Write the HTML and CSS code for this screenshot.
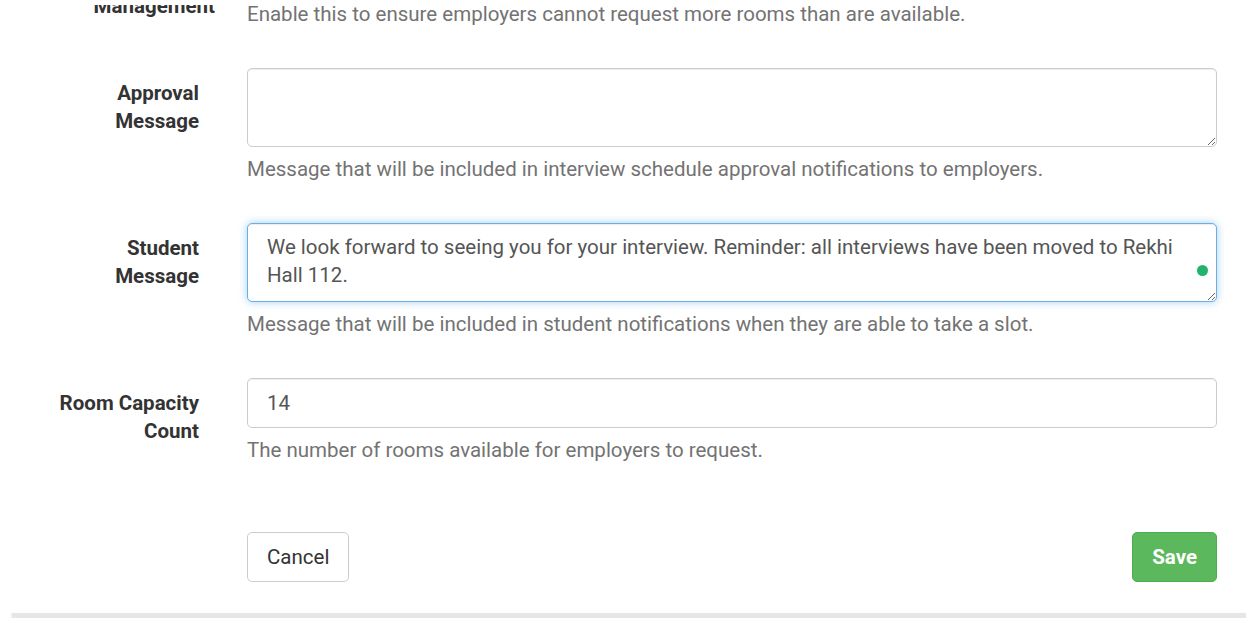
FILE: index.html
```html
<!DOCTYPE html>
<html lang="en">
<head>
<meta charset="utf-8">
<title>Interview Settings</title>
<link rel="stylesheet" href="styles.css">
</head>
<body>
<div class="page">
  <div class="top-mask"></div>
  <form class="form">
    <div class="row row-top">
      <label class="label label-top">Room Capacity Management</label>
      <div class="field">
        <div class="check-line"></div>
        <p class="help">Enable this to ensure employers cannot request more rooms than are available.</p>
      </div>
    </div>

    <div class="row">
      <label class="label" for="approval">Approval Message</label>
      <div class="field">
        <textarea id="approval" class="control area"></textarea>
        <p class="help">Message that will be included in interview schedule approval notifications to employers.</p>
      </div>
    </div>

    <div class="row">
      <label class="label" for="student">Student Message</label>
      <div class="field">
        <div class="area-wrap">
          <textarea id="student" class="control area focused">We look forward to seeing you for your interview. Reminder: all interviews have been moved to Rekhi Hall 112.</textarea>
          <span class="dot"></span>
        </div>
        <p class="help">Message that will be included in student notifications when they are able to take a slot.</p>
      </div>
    </div>

    <div class="row">
      <label class="label" for="rooms">Room Capacity Count</label>
      <div class="field">
        <input id="rooms" class="control input" type="text" value="14">
        <p class="help">The number of rooms available for employers to request.</p>
      </div>
    </div>

    <div class="row actions-row">
      <div></div>
      <div class="actions">
        <button type="button" class="btn btn-default">Cancel</button>
        <button type="button" class="btn btn-save">Save</button>
      </div>
    </div>
  </form>
  <div class="card-edge"></div>
</div>
</body>
</html>
```

FILE: styles.css
```css
* { box-sizing: border-box; }

html, body {
  margin: 0;
  padding: 0;
  background: #fff;
  overflow: hidden;
}

body {
  font-family: Roboto, "Liberation Sans", Arial, sans-serif;
  font-size: 20.5px;
  line-height: 28px;
  color: #333;
}

.page {
  position: relative;
  width: 1246px;
  height: 618px;
  overflow: hidden;
}

.top-mask {
  position: absolute;
  left: 0;
  top: 0;
  width: 240px;
  height: 5px;
  background: #fff;
  z-index: 2;
}

.form {
  padding-right: 29px;
  display: flex;
  flex-direction: column;
  gap: 40px;
}

.row {
  display: grid;
  grid-template-columns: 199px 1fr;
  column-gap: 48px;
}

.row-top {
  margin-top: -47px;
}

.label {
  text-align: right;
  font-weight: 700;
  padding-top: 11px;
  padding-left: 45px;
  color: #333;
}

.label-top {
  margin-right: -16px;
}

.field {
  display: flex;
  flex-direction: column;
  min-width: 0;
}

.check-line {
  height: 39px;
}

.help {
  margin: 8px 0 0;
  color: #737373;
  font-size: 20.5px;
  line-height: 28px;
}

.control {
  display: block;
  width: 100%;
  font-family: inherit;
  font-size: 20.5px;
  line-height: 28px;
  color: #555;
  background: #fff;
  border: 1px solid #ccc;
  border-radius: 5px;
  box-shadow: inset 0 1px 1px rgba(0, 0, 0, 0.075);
  padding: 9px 19px;
  margin: 0;
  outline: none;
}

.area {
  height: 79px;
  resize: vertical;
}

.area.focused {
  border-color: #66afe9;
  box-shadow: inset 0 1px 1px rgba(0, 0, 0, 0.075), 0 0 8px rgba(102, 175, 233, 0.6);
}

.area-wrap {
  position: relative;
}

.dot {
  position: absolute;
  right: 9px;
  top: 42px;
  width: 11px;
  height: 11px;
  border-radius: 50%;
  background: #21b36b;
}

.input {
  height: 50px;
  padding: 10px 19px;
}

.actions-row {
  margin-top: 28px;
}

.actions {
  display: flex;
  justify-content: space-between;
  align-items: center;
}

.btn {
  font-family: inherit;
  font-size: 20.5px;
  line-height: 28px;
  height: 50px;
  border-radius: 5px;
  padding: 10px 19px;
  cursor: pointer;
}

.btn-default {
  background: #fff;
  color: #333;
  border: 1px solid #ccc;
}

.btn-save {
  background: #5cb85c;
  border: 1px solid #4cae4c;
  color: #fff;
  font-weight: 700;
  padding: 10px 19px;
}

.card-edge {
  margin: 31px 0 0 12px;
  height: 6px;
  background: #e6e6e6;
  box-shadow: -1px 0 1px rgba(0, 0, 0, 0.05);
}
```
